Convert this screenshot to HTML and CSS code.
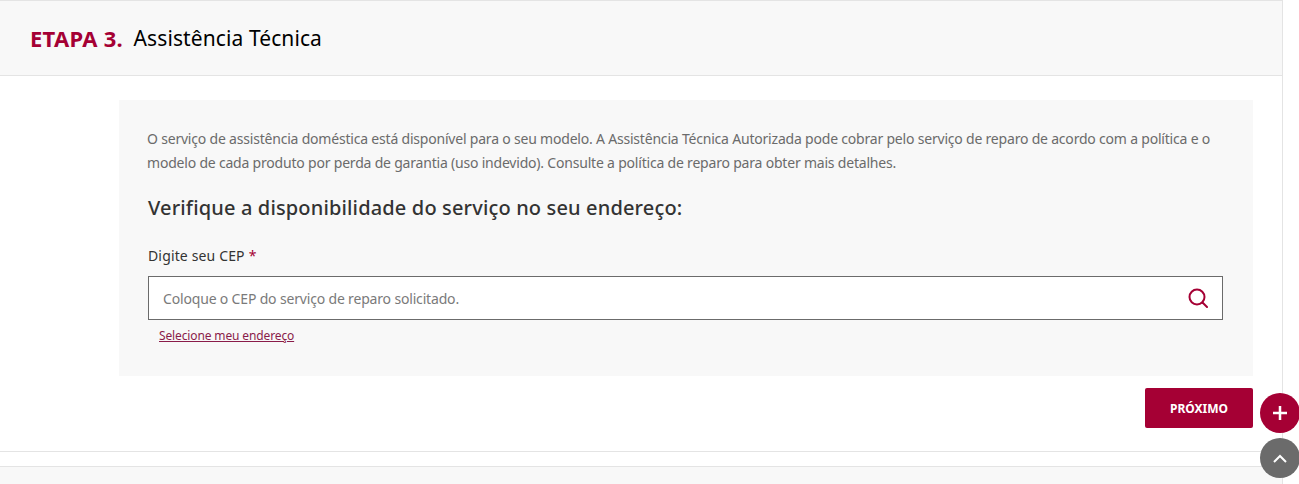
FILE: index.html
```html
<!DOCTYPE html>
<html lang="pt-BR">
  <head>
    <meta charset="UTF-8" />
    <title>Assistência Técnica</title>
    <link rel="stylesheet" href="styles.css">
  </head>
  <body>
    <div class="steps">
      <section class="step">
        <h2 class="step-title"><span class="step-num">ETAPA 3.</span> Assistência Técnica</h2>
        <div class="step-body">
          <div class="panel">
            <p class="notice">O serviço de assistência doméstica está disponível para o seu modelo. A Assistência Técnica Autorizada pode cobrar pelo serviço de reparo de acordo com a política e o modelo de cada produto por perda de garantia (uso indevido). Consulte a política de reparo para obter mais detalhes.</p>
            <h3 class="panel-title">Verifique a disponibilidade do serviço no seu endereço:</h3>
            <label class="field-label" for="cep">Digite seu CEP<span class="req">*</span></label>
            <div class="search-box">
              <input class="search-input" type="text" id="cep" placeholder="Coloque o CEP do serviço de reparo solicitado." />
              <svg class="search-icon" width="20" height="20" viewBox="0 0 20 20" fill="none" stroke="#a50034" stroke-width="2">
                <circle cx="9" cy="9" r="7.5" />
                <path d="M14.5 14.5l4.5 4.5" stroke-linecap="round" />
              </svg>
            </div>
            <a class="address-link" href="#">Selecione meu endereço</a>
          </div>
          <div class="actions">
            <button class="next-btn" type="button">PRÓXIMO</button>
          </div>
        </div>
      </section>
      <div class="next-step"></div>
    </div>

    <a class="float-btn float-plus" href="#" aria-label="Abrir">
      <svg width="14" height="14" viewBox="0 0 14 14" stroke="#fff" stroke-width="2.5"><path d="M7 0v14M0 7h14" /></svg>
    </a>
    <a class="float-btn float-top" href="#" aria-label="Topo">
      <svg width="14" height="9" viewBox="0 0 14 9" fill="none" stroke="#fff" stroke-width="2"><path d="M1 8l6-6 6 6" /></svg>
    </a>
  </body>
</html>
```

FILE: styles.css
```css
html, body {
  height: 484px;
  overflow: hidden;
}

body {
  margin: 0;
  background: #ffffff;
  font-family: "Noto Sans", "Liberation Sans", sans-serif;
  color: #333333;
}

.steps {
  width: 1283px;
  height: 484px;
  border-right: 1px solid #e4e4e4;
  border-top: 1px solid #e4e4e4;
  box-sizing: border-box;
}

.step {
  height: 450px;
  border-bottom: 1px solid #e4e4e4;
}

.step-title {
  margin: 0;
  height: 74px;
  padding-left: 30px;
  display: flex;
  align-items: center;
  gap: 5px;
  background: #f8f8f8;
  border-bottom: 1px solid #e4e4e4;
  color: #000000;
  font-size: 21px;
  font-weight: 400;
  letter-spacing: 0.1px;
  white-space: pre;
}

.step-num {
  color: #a50034;
  font-size: 22px;
  font-weight: 700;
  letter-spacing: 0.25px;
}

.step-body {
  padding: 24px 29px 0 119px;
}

.panel {
  height: 276px;
  box-sizing: border-box;
  padding: 27px 30px 0 28px;
  background: #f8f8f8;
}

.notice {
  margin: 0;
  font-size: 14px;
  line-height: 24px;
  letter-spacing: -0.2px;
  color: #6b6b6b;
}

.panel-title {
  margin: 19px 0 0 1px;
  font-size: 20px;
  line-height: 28px;
  font-weight: 500;
  letter-spacing: 0.15px;
  color: #333333;
}

.field-label {
  display: block;
  margin: 24px 0 0 1px;
  font-size: 14px;
  line-height: 20px;
  letter-spacing: 0.15px;
  color: #333333;
}

.req {
  margin-left: 4px;
  color: #a50034;
}

.search-box {
  display: flex;
  align-items: center;
  height: 44px;
  margin: 10px 0 0 1px;
  box-sizing: border-box;
  padding: 0 14px 0 14px;
  background: #ffffff;
  border: 1px solid #6b6b6b;
}

.search-input {
  flex: 1;
  border: 0;
  outline: 0;
  padding: 0;
  background: transparent;
  font-family: inherit;
  font-size: 14px;
  letter-spacing: -0.17px;
}

.search-input::placeholder {
  color: #7a7a7a;
  opacity: 1;
}

.address-link {
  display: inline-block;
  margin: 8px 0 0 12px;
  font-size: 12px;
  line-height: 16px;
  letter-spacing: -0.13px;
  color: #8a1c4a;
}

.actions {
  display: flex;
  justify-content: flex-end;
  margin-top: 12px;
}

.next-btn {
  width: 108px;
  height: 40px;
  border: 0;
  border-radius: 2px;
  background: #a50034;
  color: #ffffff;
  font-family: inherit;
  font-size: 12px;
  font-weight: 700;
}

.next-step {
  height: 17px;
  margin-top: 14px;
  background: #f8f8f8;
  border-top: 1px solid #e4e4e4;
}

.float-btn {
  position: fixed;
  left: 1260px;
  width: 40px;
  height: 40px;
  border-radius: 50%;
  display: flex;
  align-items: center;
  justify-content: center;
}

.float-plus {
  top: 393px;
  background: #a50034;
}

.float-top {
  top: 438px;
  background: #6b6b6b;
}
```
